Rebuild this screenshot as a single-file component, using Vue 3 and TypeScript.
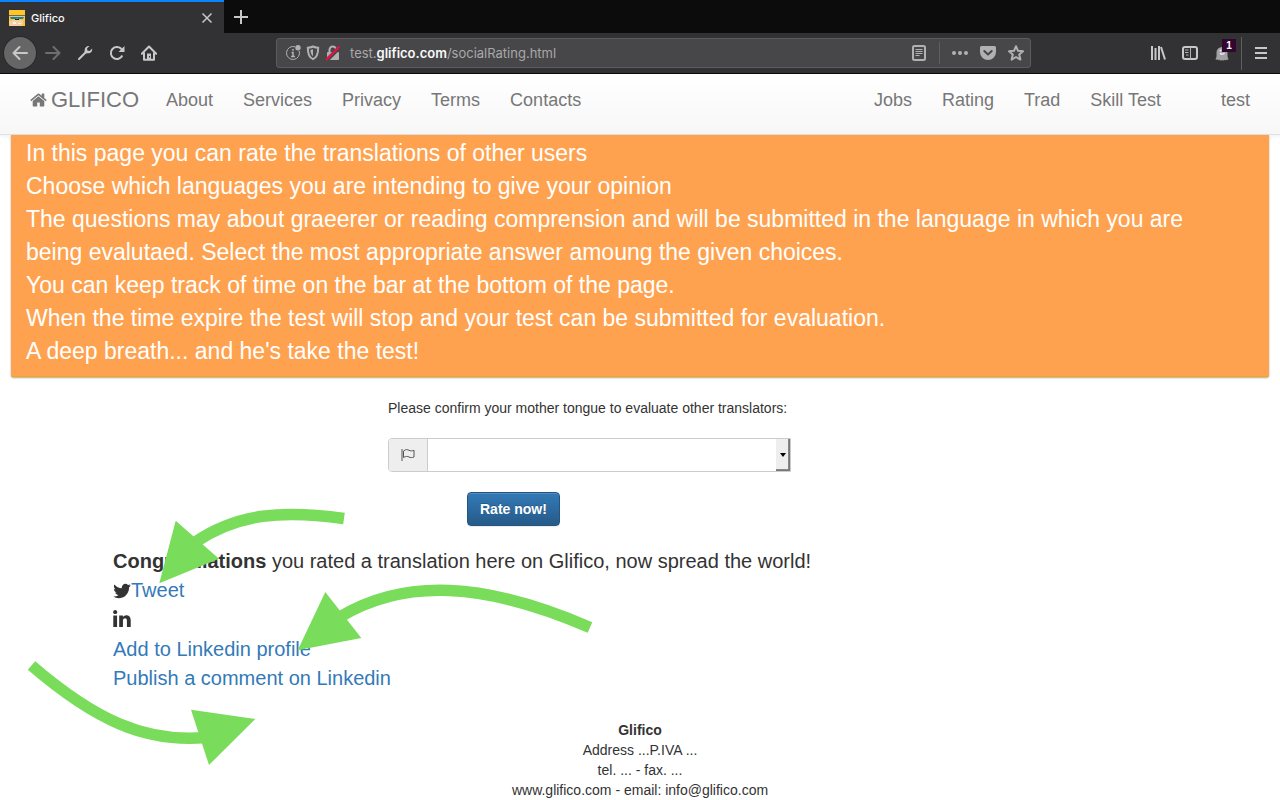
<script setup lang="ts">
import { ref } from 'vue'

interface NavItem {
  label: string
  apart?: boolean
}

const leftNav: NavItem[] = [
  { label: 'About' },
  { label: 'Services' },
  { label: 'Privacy' },
  { label: 'Terms' },
  { label: 'Contacts' },
]

const rightNav: NavItem[] = [
  { label: 'Jobs' },
  { label: 'Rating' },
  { label: 'Trad' },
  { label: 'Skill Test' },
  { label: 'test', apart: true },
]

const instructions: string[] = [
  'In this page you can rate the translations of other users',
  'Choose which languages you are intending to give your opinion',
  'The questions may about graeerer or reading comprension and will be submitted in the language in which you are being evalutaed. Select the most appropriate answer amoung the given choices.',
  'You can keep track of time on the bar at the bottom of the page.',
  'When the time expire the test will stop and your test can be submitted for evaluation.',
  "A deep breath... and he's take the test!",
]

const tongue = ref<string>('')
</script>

<template>
  <div class="window">
    <header class="chrome">
      <div class="tabs">
        <div class="tab">
          <svg class="icon" viewBox="0 0 16 16" aria-hidden="true">
            <rect width="16" height="16" fill="#ffc52e" />
            <rect y="5" width="16" height="1" fill="#7a6a35" />
            <rect y="6" width="16" height="2" fill="#d9c79a" />
            <path d="M1 7h14l-1 2H9.500L8 8.500 6.500 9H2z" fill="#16839a" />
            <rect x="6" y="9" width="4" height="1" fill="#1d2530" />
            <path d="M0 11h2l2-1h8l2 1v3l-2 2H1z" fill="#f6cfa9" />
            <path d="M4 12h3v2H4zM9 13h3v1H9z" fill="#fff1df" />
          </svg>
          <span class="tab-title">Glifico</span>
          <button class="plain" aria-label="Close tab">
            <svg class="icon" viewBox="0 0 16 16"><path d="M3.500 3.500l9 9M12.500 3.500l-9 9" class="line" /></svg>
          </button>
        </div>
        <button class="plain new-tab" aria-label="New tab">
          <svg class="icon" viewBox="0 0 16 16"><path d="M8 1v14M1 8h14" class="line" /></svg>
        </button>
      </div>

      <div class="toolbar">
        <button class="tool back" aria-label="Back">
          <svg class="icon" viewBox="0 0 16 16"><path d="M15 8H1.500M7.500 2L1.500 8l6 6" class="line round" /></svg>
        </button>
        <button class="tool dim" aria-label="Forward">
          <svg class="icon" viewBox="0 0 16 16"><path d="M1 8h13.500M8.500 2l6 6-6 6" class="line round" /></svg>
        </button>
        <button class="tool" aria-label="Tools">
          <svg class="icon" viewBox="0 0 16 16"><path d="M2 14l7-7" class="line round" /><path d="M12.500 1C9.800.6 7.600 2.400 7.700 5c0 .9.100 1.400-.4 2L9 8.700c.7-.5 1.100-.5 2-.4 2.700.2 4.600-2 4.100-4.800L12.600 6l-2.200-.4L10 3.400z" fill="#c8c8c9" /></svg>
        </button>
        <button class="tool" aria-label="Reload">
          <svg class="icon" viewBox="0 0 16 16"><path d="M13.300 10.500A6 6 0 1 1 12 3.600l1.500 1.500" class="line" /><path d="M15.500 1v6h-6z" fill="#c8c8c9" /></svg>
        </button>
        <button class="tool" aria-label="Home">
          <svg class="icon" viewBox="0 0 16 16"><path d="M.8 8.700L8 1.500l7.200 7.200M3 8v6.800h10V8" class="line round" /><path d="M6 14V8.500h4V14z" fill="#c8c8c9" /><rect x="8" y="11" width="1" height="1.500" fill="#323234" /></svg>
        </button>

        <div class="spacer"></div>
        <div class="address">
          <svg class="icon" viewBox="0 0 16 16" aria-hidden="true">
            <path d="M10 1.800A6.500 6.500 0 1 0 14.200 6" class="hair" />
            <circle cx="13" cy="2.700" r="2.700" fill="#b1b1b3" />
            <path d="M8 4v1.800M6.500 7.500H8V11M6 11.500h4" fill="none" stroke="#b1b1b3" stroke-width="1.500" />
          </svg>
          <svg class="icon" viewBox="0 0 16 16" aria-hidden="true">
            <path d="M8 1.500c1.600.8 3.400 1.200 5.200 1.200C13.200 9 11.700 12.600 8 14.200 4.300 12.600 2.800 9 2.800 2.700c1.800 0 3.600-.4 5.200-1.200z" class="line grey" />
            <path d="M8 4.200v7C6.200 9.800 5.400 7.800 5.400 5z" fill="#b1b1b3" />
          </svg>
          <svg class="icon" viewBox="0 0 16 16" aria-hidden="true">
            <path d="M4.500 7V4.700a3.300 3.300 0 0 1 6.600 0V7" class="line grey" />
            <rect x="2" y="7" width="12" height="8" rx="1" fill="#b1b1b3" />
            <path d="M1 16L15 2" stroke="#474749" stroke-width="4" />
            <path d="M1 15L14.500 1.500" stroke="#f20d40" stroke-width="2" />
          </svg>
          <div class="url" role="textbox" aria-label="Address" contenteditable="true" spellcheck="false">test.<b>glifico.com</b>/socialRating.html</div>
          <button class="plain" aria-label="Reader view">
            <svg class="icon" viewBox="0 0 16 16"><rect x="2" y="1" width="12" height="14" rx="1.500" class="line grey" /><path d="M4.500 4.500h7M4.500 6.500h7M4.500 8.500h7M4.500 10.500h4" class="hair" /></svg>
          </button>
          <span class="rule"></span>
          <div class="page-actions">
            <button class="plain" aria-label="Page actions">
              <svg class="icon" viewBox="0 0 16 16" fill="#b1b1b3"><circle cx="2" cy="8" r="2" /><circle cx="8" cy="8" r="2" /><circle cx="14" cy="8" r="2" /></svg>
            </button>
            <button class="plain" aria-label="Save to Pocket">
              <svg class="icon" viewBox="0 0 16 16"><path d="M1.500 1h13A1.500 1.500 0 0 1 16 2.500V7A8 8 0 0 1 0 7V2.500A1.500 1.500 0 0 1 1.500 1z" fill="#b1b1b3" /><path d="M4.300 6L8 9.500 11.700 6" fill="none" stroke="#474749" stroke-width="2" stroke-linecap="round" stroke-linejoin="round" /></svg>
            </button>
            <button class="plain" aria-label="Bookmark">
              <svg class="icon" viewBox="0 0 16 16"><path d="M8 1.200l2 4.600 5 .5-3.800 3.300 1.200 5L8 12l-4.400 2.600 1.200-5L1 6.300l5-.5z" class="line grey" stroke-linejoin="round" /></svg>
            </button>
          </div>
        </div>
        <div class="spacer"></div>

        <button class="tool" aria-label="Library">
          <svg class="icon" viewBox="0 0 16 16"><path d="M2 1v14M5.500 3v12M9 1v14M11 2l4 12.500" class="line" /></svg>
        </button>
        <button class="tool" aria-label="Sidebars">
          <svg class="icon" viewBox="0 0 16 16"><rect x="1" y="2" width="14" height="12" rx="2" class="line" /><path d="M8.500 2v12M3 5h3.500M3 7.500h3.500M4 10h2.500" class="hair" /></svg>
        </button>
        <button class="tool ghost" aria-label="Tracker blocker">
          <svg class="icon" viewBox="0 0 16 16"><path d="M3 14.500c-1 .5-1.500 0-1.500-.5C3 12 2.500 10 2.500 7.500a5.500 5.500 0 0 1 11 0c0 2.500-.3 4.500 1 6.500 0 .6-.6 1-1.500.5-.6.9-1.600 1-2.200.2-.7 1-2 1-2.800.2-.8.9-2 .8-2.700-.2-.5.800-1.200.7-1.300-.2z" fill="#a2a2a4" /><path d="M6 8q2 2.500 4.500 0" stroke="#e8e8e8" stroke-width="1.500" fill="none" /><circle cx="6.500" cy="5.500" r="1" fill="#eee" /></svg>
          <span class="badge">1</span>
        </button>
        <span class="rule tall"></span>
        <button class="tool" aria-label="Menu">
          <svg class="icon" viewBox="0 0 16 16"><path d="M2 3h12M2 8h12M2 13h12" class="line" /></svg>
        </button>
      </div>
    </header>

    <nav class="navbar">
      <a href="#" class="brand">
        <svg class="house" viewBox="60 0 1672 1792" fill="currentColor" aria-hidden="true"><path d="M1472 992v480q0 26-19 45t-45 19h-384v-384H768v384H384q-26 0-45-19t-19-45V992q0-1 .5-3t.5-3l575-474 575 474q1 2 1 6zm223-69l-62 74q-8 9-21 11h-3q-13 0-21-7L896 424l-692 577q-12 8-24 7-13-2-21-11l-62-74q-8-10-7-23.500t11-21.500l719-599q32-26 76-26t76 26l244 204V288q0-14 9-23t23-9h192q14 0 23 9t9 23v408l219 182q10 8 11 21.500t-7 23.500z" /></svg>
        GLIFICO
      </a>
      <a v-for="item in leftNav" :key="item.label" href="#">{{ item.label }}</a>
      <div class="spacer"></div>
      <a v-for="item in rightNav" :key="item.label" href="#" :class="{ apart: item.apart }">{{ item.label }}</a>
    </nav>

    <main>
      <section class="banner">
        <p v-for="line in instructions" :key="line">{{ line }}</p>
      </section>

      <form class="rate" @submit.prevent>
        <label for="tongue">Please confirm your mother tongue to evaluate other translators:</label>
        <div class="group">
          <span class="addon">
            <svg class="flag" viewBox="0 0 14 14" aria-hidden="true"><path d="M1 1v12M2.500 3C5 1 6.500 1.500 8 2.300s3 .7 5 0V9c-2 .8-3.500.7-5 0s-3-1-5.500.5M2.500 3v6.500" fill="none" stroke="#555" /></svg>
          </span>
          <div class="picker">
            <select id="tongue" v-model="tongue"><option value=""></option></select>
            <span class="arrow" aria-hidden="true"></span>
          </div>
        </div>
        <button class="submit" type="submit">Rate now!</button>
      </form>

      <section class="social">
        <p><strong>Congratulations</strong> you rated a translation here on Glifico, now spread the world!</p>
        <p class="with-icon">
          <svg class="mark" viewBox="108 0 1576 1792" aria-hidden="true"><path fill="#333" d="M1684 408q-67 98-162 167 1 14 1 42 0 130-38 259.500t-115.500 248.500-184.500 210.500-258 146-323 54.500q-271 0-496-145 35 4 78 4 225 0 401-138-105-2-188-64.500t-114-159.500q33 5 61 5 43 0 85-11-112-23-185.500-111.500t-73.500-205.500v-4q68 38 146 41-66-44-105-115t-39-154q0-88 44-163 121 149 294.500 238.500t371.500 99.500q-8-38-8-74 0-134 94.500-228.500t228.500-94.500q140 0 236 102 109-21 205-78-37 115-142 178 93-10 186-50z" /></svg><a href="#">Tweet</a>
        </p>
        <p class="with-icon linkedin">
          <svg class="mark" viewBox="147 140 1517 1480" role="img" aria-label="Linkedin"><path fill="#333" d="M477 625v991h-330v-991h330zm21-306q1 73-50.500 122t-135.500 49h-2q-82 0-132-49t-50-122q0-74 51.500-122.500t134.500-48.500 133 48.500 51 122.500zm1166 729v568h-329v-530q0-105-40.500-164.500t-126.500-59.500q-63 0-105.500 34.500t-63.500 85.500q-11 30-11 81v553h-329q2-399 2-647t-1-296l-1-48h329v144h-2q20-32 41-56t56.500-52 87-43.500 114.500-15.500q171 0 275 113.500t104 332.500z" /></svg>
        </p>
        <p><a href="#">Add to Linkedin profile</a></p>
        <p><a href="#">Publish a comment on Linkedin</a></p>
      </section>
    </main>

    <footer class="footer">
      <strong>Glifico</strong>
      <span>Address ...P.IVA ...</span>
      <span>tel. ... - fax. ...</span>
      <span>www.glifico.com - email: info@glifico.com</span>
    </footer>

    <svg class="arrows" width="600" height="780" viewBox="0 0 600 780" aria-hidden="true">
      <g fill="none" stroke="#79dc5b" stroke-width="11.500">
        <path d="M344 518.500C284 510 237 513 194 543" />
        <path d="M590 627.500C485 582 405 578 340 617" />
        <path d="M31.500 665.500C95 720 145 743 206 737.500" />
      </g>
      <g fill="#79dc5b">
        <path d="M175.700 520.700L219 558.700L159.300 583.300z" />
        <path d="M325.300 592L361.300 638L297.700 650.300z" />
        <path d="M191 709.700L255.300 719L209 765z" />
      </g>
    </svg>
  </div>
</template>

<style>
body {
  margin: 0;
  background: #fff;
}
</style>

<style scoped>
.window {
  position: relative;
  font: 14px/20px "Liberation Sans", Arial, sans-serif;
  color: #333;
}
p {
  margin: 0;
}
a {
  color: #337ab7;
  text-decoration: none;
}
.spacer {
  flex: 1;
}
.icon {
  display: block;
  width: 16px;
  height: 16px;
  flex: none;
}
.line {
  fill: none;
  stroke: #c8c8c9;
  stroke-width: 2;
}
.round {
  stroke-linecap: round;
  stroke-linejoin: round;
}
.grey {
  stroke: #b1b1b3;
}
.hair {
  fill: none;
  stroke: #b1b1b3;
  stroke-width: 1;
}
.plain,
.tool {
  border: 0;
  padding: 0;
  background: none;
}

.chrome {
  font-family: Inter, sans-serif;
}
.tabs {
  display: flex;
  height: 33px;
  background: #0c0c0d;
}
.tab {
  display: flex;
  align-items: center;
  box-sizing: border-box;
  width: 224px;
  padding: 0 9px;
  border-top: 2px solid #0a84ff;
  background: #323234;
}
.tab .line {
  stroke-width: 1.5;
}
.tab-title {
  flex: 1;
  margin-left: 6px;
  font-size: 11px;
  font-weight: 500;
  color: #f9f9fa;
}
.new-tab {
  padding: 0 9px;
}
.toolbar {
  display: flex;
  align-items: center;
  height: 40px;
  padding: 0 3px 0 4px;
  background: #323234;
  border-bottom: 1px solid #0c0c0d;
}
.tool {
  display: flex;
  align-items: center;
  justify-content: center;
  width: 32px;
  height: 32px;
}
.back {
  margin-right: 1px;
  border-radius: 50%;
  background: #666667;
  box-shadow: 0 0 0 1px #29292b;
}
.dim {
  opacity: 0.4;
}
.address {
  display: flex;
  flex: 0 1 755px;
  align-items: center;
  gap: 4px;
  box-sizing: border-box;
  height: 30px;
  padding: 0 6px 0 8px;
  border: 1px solid #5c5c5e;
  border-radius: 3px;
  background: #474749;
}
.url {
  flex: 1;
  margin-left: 5px;
  font-size: 13px;
  line-height: 22px;
  white-space: nowrap;
  color: #a8a8aa;
  outline: 0;
}
.url b {
  font-weight: 600;
  color: #f9f9fa;
}
.rule {
  width: 1px;
  height: 22px;
  margin: 0 8px;
  background: #5e5e60;
}
.tall {
  height: 33px;
  margin: 0 3px;
}
.page-actions {
  display: flex;
  gap: 12px;
}
.ghost {
  position: relative;
}
.badge {
  position: absolute;
  top: 2px;
  right: 2px;
  width: 14px;
  background: #33062f;
  color: #fff;
  font-size: 10px;
  font-weight: 600;
  line-height: 13px;
  text-align: center;
}

.navbar {
  position: relative;
  display: flex;
  padding: 16px 15px 24px;
  border-bottom: 1px solid #e2e2e2;
  background: linear-gradient(#fff, #f7f7f7);
  box-shadow: 0 1px 4px rgba(0, 0, 0, 0.08);
}
.navbar a {
  padding: 0 15px;
  font-size: 18px;
  white-space: nowrap;
  color: #777;
}
.navbar .brand {
  display: flex;
  align-items: center;
  gap: 4px;
  padding-right: 12px;
  font-size: 22px;
}
.house {
  width: 17px;
  height: 18px;
}
.navbar .apart {
  margin-left: 30px;
}
.banner {
  position: relative;
  margin: 0 11px;
  padding: 2px 45px 8px 15px;
  border-bottom: 1px solid #ffa500;
  border-radius: 0 0 2px 2px;
  background: #ffa24f;
  box-shadow: 0 1px 2px rgba(0, 0, 0, 0.35);
  color: #fff;
  font-size: 23px;
  line-height: 33px;
}

.rate {
  display: flex;
  flex-direction: column;
  align-items: flex-start;
  gap: 20px;
  width: fit-content;
  min-width: 403px;
  margin: 21px 0 0 388px;
}
.group {
  display: flex;
  align-self: stretch;
  box-sizing: border-box;
  height: 34px;
  border: 1px solid #ccc;
  border-radius: 4px 0 0 4px;
}
.addon {
  display: flex;
  align-items: center;
  justify-content: center;
  width: 38px;
  border-right: 1px solid #ccc;
  border-radius: 3px 0 0 3px;
  background: #eee;
}
.flag {
  width: 14px;
  height: 14px;
}
.picker {
  position: relative;
  flex: 1;
  display: flex;
}
.picker select {
  flex: 1;
  border: 0;
  padding: 0 18px 0 12px;
  appearance: none;
  background: #fff;
  font: inherit;
  color: #555;
}
.arrow {
  position: absolute;
  top: 0;
  right: 0;
  bottom: 0;
  display: flex;
  align-items: center;
  justify-content: center;
  width: 13px;
  border-right: 1px solid #777;
  border-bottom: 1px solid #777;
  box-shadow: inset -1px -1px 0 #888;
  background: #eee;
  pointer-events: none;
}
.arrow::before {
  content: "";
  border: 3px solid transparent;
  border-top: 4px solid #000;
  border-bottom: 0;
}
.submit {
  height: 34px;
  margin-left: 79px;
  padding: 0 12px;
  border: 1px solid #245580;
  border-radius: 4px;
  background: linear-gradient(#337ab7, #265a88);
  box-shadow: inset 0 1px 0 rgba(255, 255, 255, 0.15), 0 1px 1px rgba(0, 0, 0, 0.08);
  color: #fff;
  font: bold 14px/20px "Liberation Sans", Arial, sans-serif;
  text-shadow: 0 -1px 0 rgba(0, 0, 0, 0.2);
}

.social {
  margin: 21px 113px 0;
  font-size: 20px;
  line-height: 29px;
}
.with-icon {
  display: flex;
  align-items: center;
}
.mark {
  width: 18px;
  height: 20px;
}
.linkedin {
  box-sizing: border-box;
  height: 30px;
  padding-bottom: 3px;
}
.linkedin .mark {
  height: 17px;
}
.footer {
  display: flex;
  flex-direction: column;
  align-items: center;
  margin-top: 27px;
}
.arrows {
  position: absolute;
  top: 0;
  left: 0;
  pointer-events: none;
}
</style>
